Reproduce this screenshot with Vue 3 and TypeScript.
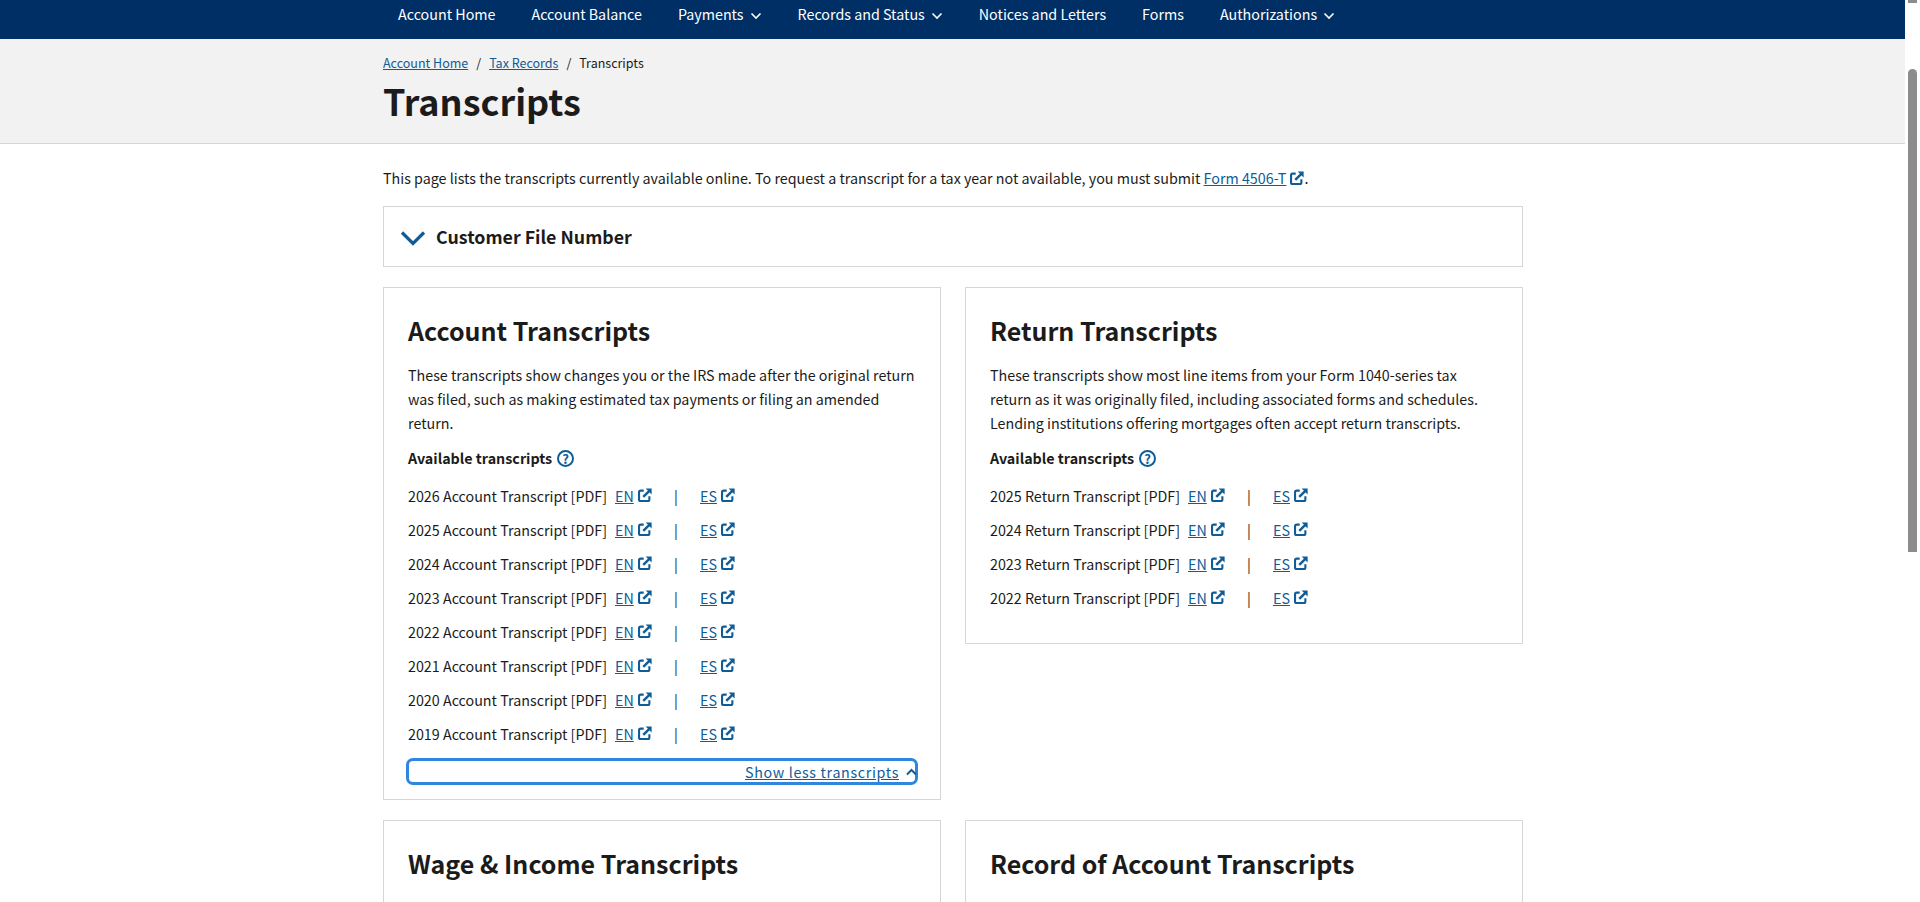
<template>
  <div class="page">
    <div class="content">
      <nav class="topnav">
        <div class="wrap nav-row">
          <a v-for="item in navItems" :key="item.label" class="nav-item">
            {{ item.label }}
            <svg v-if="item.caret" class="caret" viewBox="0 0 12 8"><path d="M1.5 1.5 6 6l4.5-4.5" /></svg>
          </a>
        </div>
      </nav>

      <header class="banner">
        <div class="wrap">
          <div class="crumbs">
            <a>Account Home</a><span class="sep">/</span><a>Tax Records</a><span class="sep">/</span><span>Transcripts</span>
          </div>
          <h1>Transcripts</h1>
        </div>
      </header>

      <main class="wrap main">
        <p class="intro">
          This page lists the transcripts currently available online. To request a transcript for a tax year not available, you must submit
          <a>Form 4506-T</a><svg class="ext" viewBox="0 0 16 16"><use href="#ext-icon" /></svg>.
        </p>

        <section class="accordion">
          <svg class="acc-chevron" viewBox="0 0 26 16"><path d="M2 2.5 13 13.5 24 2.5" /></svg>
          <span class="acc-title">Customer File Number</span>
        </section>

        <div class="cards">
          <section v-for="card in cards" :key="card.title" class="card" :class="card.cls">
            <h2>{{ card.title }}</h2>
            <template v-if="card.text">
              <p class="desc">{{ card.text }}</p>
              <div class="avail">
                Available transcripts
                <span class="help">?</span>
              </div>
              <div v-for="row in card.rows" :key="row" class="row">
                <span class="row-name">{{ row }} [PDF]</span>
                <a class="lang en">EN</a>
                <svg class="ext" viewBox="0 0 16 16"><use href="#ext-icon" /></svg>
                <span class="pipe">|</span>
                <a class="lang es">ES</a>
                <svg class="ext" viewBox="0 0 16 16"><use href="#ext-icon" /></svg>
              </div>
              <div v-if="card.more" class="show-less">
                <a>Show less transcripts</a>
                <svg class="up" viewBox="0 0 12 8"><path d="M1.5 6.5 6 2l4.5 4.5" /></svg>
              </div>
            </template>
          </section>
        </div>
      </main>
    </div>

    <aside class="scrollbar">
      <div class="nub"></div>
      <div class="thumb"></div>
    </aside>

    <svg class="defs" width="0" height="0">
      <symbol id="ext-icon" viewBox="0 0 16 16">
        <path d="M6.5 3H3A1.8 1.8 0 0 0 1.2 4.8V13A1.8 1.8 0 0 0 3 14.8h8.2A1.8 1.8 0 0 0 13 13V9.5" fill="none" stroke="currentColor" stroke-width="2.4" />
        <path d="M6 10.2 13 3.2" fill="none" stroke="currentColor" stroke-width="2.8" />
        <path d="M8.8 .6h6.8v6.8z" fill="currentColor" />
      </symbol>
    </svg>
  </div>
</template>

<script setup lang="ts">
interface NavItem {
  label: string
  caret?: boolean
}

interface Card {
  title: string
  cls: string
  text?: string
  rows?: string[]
  more?: boolean
}

const navItems: NavItem[] = [
  { label: 'Account Home' },
  { label: 'Account Balance' },
  { label: 'Payments', caret: true },
  { label: 'Records and Status', caret: true },
  { label: 'Notices and Letters' },
  { label: 'Forms' },
  { label: 'Authorizations', caret: true }
]

const accountYears = [2026, 2025, 2024, 2023, 2022, 2021, 2020, 2019]
const returnYears = [2025, 2024, 2023, 2022]

const cards: Card[] = [
  {
    title: 'Account Transcripts',
    cls: 'account',
    text: 'These transcripts show changes you or the IRS made after the original return was filed, such as making estimated tax payments or filing an amended return.',
    rows: accountYears.map((y) => `${y} Account Transcript`),
    more: true
  },
  {
    title: 'Return Transcripts',
    cls: 'return',
    text: 'These transcripts show most line items from your Form 1040-series tax return as it was originally filed, including associated forms and schedules. Lending institutions offering mortgages often accept return transcripts.',
    rows: returnYears.map((y) => `${y} Return Transcript`)
  },
  { title: 'Wage & Income Transcripts', cls: 'lower' },
  { title: 'Record of Account Transcripts', cls: 'lower' }
]
</script>

<style>
html,
body {
  margin: 0;
  height: 902px;
  overflow: hidden;
  background: #fff;
}
</style>

<style scoped>
.page {
  display: flex;
  width: 1920px;
  height: 902px;
  overflow: hidden;
  font-family: "Noto Sans CJK SC", "Noto Sans", sans-serif;
  font-size: 14.3px;
  color: #1b1b1b;
  background: #fff;
}
.content {
  flex: 1;
  min-width: 0;
}
.scrollbar {
  width: 15px;
  flex: none;
  padding: 0 3px;
  box-sizing: border-box;
}
.nub {
  height: 3px;
  margin-bottom: 66px;
  background: #8c8c8c;
}
.thumb {
  height: 483px;
  background: #8c8c8c;
  border-radius: 5px 5px 0 0;
}
.defs {
  position: absolute;
}
.wrap {
  width: 1140px;
  margin-left: 383px;
}
.topnav {
  height: 39px;
  background: #002f65;
}
.nav-row {
  display: flex;
  gap: 36px;
  padding: 0 15px;
  box-sizing: border-box;
  line-height: 28px;
  color: #fff;
}
.nav-item {
  display: flex;
  align-items: center;
  gap: 6px;
  white-space: nowrap;
}
.caret {
  width: 12px;
  height: 8px;
  margin-top: 3px;
}
.caret path,
.up path {
  fill: none;
  stroke: currentColor;
  stroke-width: 1.6;
}
.banner {
  height: 105px;
  background: #f2f2f2;
  border-bottom: 1px solid #d6d6d6;
  box-sizing: border-box;
}
.crumbs {
  padding-top: 14px;
  font-size: 12.5px;
  line-height: 20px;
}
.crumbs a {
  color: #0f5c96;
  text-decoration: underline;
}
.sep {
  margin: 0 8px;
}
h1 {
  margin: 3px 0 0;
  font-size: 36px;
  line-height: 48px;
  font-weight: 700;
}
.main {
  padding-top: 22px;
}
.intro {
  margin: 0 0 16px;
  line-height: 24px;
}
.intro a,
.lang,
.show-less a {
  color: #0f5c96;
  text-decoration: underline;
}
.ext {
  display: inline-block;
  width: 14px;
  height: 14px;
  color: #0f5c96;
  vertical-align: -1px;
}
.intro .ext {
  margin-left: 4px;
}
.accordion {
  display: flex;
  align-items: center;
  gap: 10px;
  height: 61px;
  padding: 0 16px;
  box-sizing: border-box;
  border: 1px solid #d6d6d6;
  font-size: 17.8px;
  font-weight: 700;
}
.acc-title {
  margin-bottom: 2px;
}
.acc-chevron {
  width: 26px;
  height: 16px;
  margin-top: 3px;
}
.acc-chevron path {
  fill: none;
  stroke: #0f5c96;
  stroke-width: 3.2;
}
.cards {
  display: grid;
  grid-template-columns: 558px 558px;
  column-gap: 24px;
  row-gap: 20px;
  margin-top: 20px;
  align-items: start;
}
.card {
  border: 1px solid #d6d6d6;
  padding: 24px;
  box-sizing: border-box;
}
.card.account {
  padding-bottom: 14px;
}
.card.return {
  padding-bottom: 29px;
}
.card.lower {
  height: 200px;
}
h2 {
  margin: 0;
  font-size: 25px;
  line-height: 36px;
  font-weight: 700;
}
.desc {
  margin: 15px 0 0;
  line-height: 24px;
}
.avail {
  display: flex;
  align-items: center;
  gap: 5px;
  margin-top: 11px;
  margin-bottom: 8px;
  line-height: 24px;
  font-weight: 700;
}
.help {
  display: inline-flex;
  align-items: center;
  justify-content: center;
  width: 13px;
  height: 13px;
  border: 2px solid #0f5c96;
  border-radius: 50%;
  color: #0f5c96;
  font-size: 13px;
  line-height: 1;
}
.row {
  display: flex;
  align-items: center;
  height: 34px;
  white-space: nowrap;
}
.row-name {
  margin-right: 8px;
}
.account .row-name {
  width: 199px;
}
.return .row-name {
  width: 190px;
}
.row .ext {
  margin-left: 4px;
}
.lang.en {
  width: 19px;
}
.lang.es {
  width: 17px;
}
.pipe {
  width: 4px;
  margin: 0 22px;
}
.show-less {
  display: flex;
  align-items: center;
  justify-content: flex-end;
  gap: 6px;
  height: 27px;
  margin: 8px -2px 0;
  border: 3px solid #2e86e0;
  border-radius: 7px;
  box-sizing: border-box;
  color: #0f5c96;
  letter-spacing: 0.65px;
}
.up {
  width: 13px;
  height: 8px;
  margin-right: -3px;
  color: #0f5c96;
}
.up path {
  stroke-width: 2;
}
</style>
